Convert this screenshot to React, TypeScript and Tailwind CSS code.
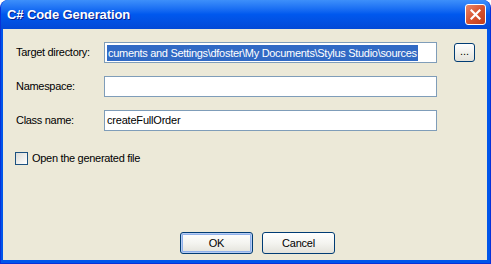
const font = { fontFamily: '"Liberation Sans", Arial, sans-serif' };

function XpButton({ label, isDefault }: { label: string; isDefault?: boolean }) {
  return (
    <button
      className={`w-[73px] h-[22px] rounded-[3px] border border-[#003C74] bg-gradient-to-b from-white via-[#f4f4f0] to-[#e3e2da] text-[11px] tracking-[-0.2px] text-black ${
        isDefault ? "shadow-[inset_0_0_0_1px_#b7cdf3,inset_0_0_0_2px_#8fb0ea]" : ""
      }`}
    >
      {label}
    </button>
  );
}

function TextRow({ label, children }: { label: string; children?: React.ReactNode }) {
  return (
    <div className="flex items-center h-[21px]">
      <span className="w-[88px] text-[11px] tracking-[-0.3px] text-black">{label}</span>
      <div className="w-[333px] h-[21px] border border-[#7F9DB9] bg-white flex items-center pl-[2px] overflow-hidden whitespace-nowrap">
        {children}
      </div>
    </div>
  );
}

export default function App() {
  return (
    <div className="w-[491px] h-[264px] bg-white" style={font}>
      <div className="w-full h-full rounded-t-[8px] bg-[#0055EA] flex flex-col overflow-hidden border-x border-b border-[#0831D9]">
        {/* title bar */}
        <div className="h-[29px] shrink-0 flex items-center pl-[6px] pr-[4px] bg-gradient-to-b from-[#3D8FFA] via-[#0058EE] to-[#0349D6]">
          <span className="text-white font-bold text-[13px] tracking-[-0.1px] [text-shadow:1px_1px_0_#0A1E8C]">
            C# Code Generation
          </span>
          <div className="ml-auto w-[21px] h-[21px] rounded-[3px] border border-white bg-gradient-to-br from-[#E8876A] via-[#D8532F] to-[#C03E1B] flex items-center justify-center">
            <svg width="11" height="11" viewBox="0 0 11 11">
              <path d="M1.5 1.5 L9.5 9.5 M9.5 1.5 L1.5 9.5" stroke="white" strokeWidth="2.2" strokeLinecap="square" />
            </svg>
          </div>
        </div>

        {/* body */}
        <div className="flex-1 ml-[2px] mr-[3px] mb-[3px] bg-[#ECE9D8] flex flex-col pl-[13px] pt-[13px]">
          <div className="flex items-center">
            <TextRow label="Target directory:">
              <span className="bg-[#316AC5] text-white text-[11px] tracking-[-0.3px] leading-[16px] px-[1px]">
                cuments and Settings\dfoster\My Documents\Stylus Studio\sources
              </span>
            </TextRow>
            <button className="ml-[17px] w-[21px] h-[19px] rounded-[3px] border border-[#003C74] bg-gradient-to-b from-white to-[#e3e2da] text-[11px] leading-none text-black pb-[2px]">
              ...
            </button>
          </div>
          <div className="mt-[13px]">
            <TextRow label="Namespace:" />
          </div>
          <div className="mt-[13px]">
            <TextRow label="Class name:">
              <span className="text-[11px] tracking-[-0.2px] text-black">createFullOrder</span>
            </TextRow>
          </div>

          <div className="mt-[19px] flex items-center -ml-[1px]">
            <div className="w-[13px] h-[13px] border border-[#1C5180] bg-gradient-to-br from-[#DCDCD7] to-white" />
            <span className="ml-[4px] text-[11px] tracking-[-0.3px] text-black">Open the generated file</span>
          </div>

          <div className="mt-auto mb-[6px] flex gap-[9px] pl-[164px]">
            <XpButton label="OK" isDefault />
            <XpButton label="Cancel" />
          </div>
        </div>
      </div>
    </div>
  );
}
